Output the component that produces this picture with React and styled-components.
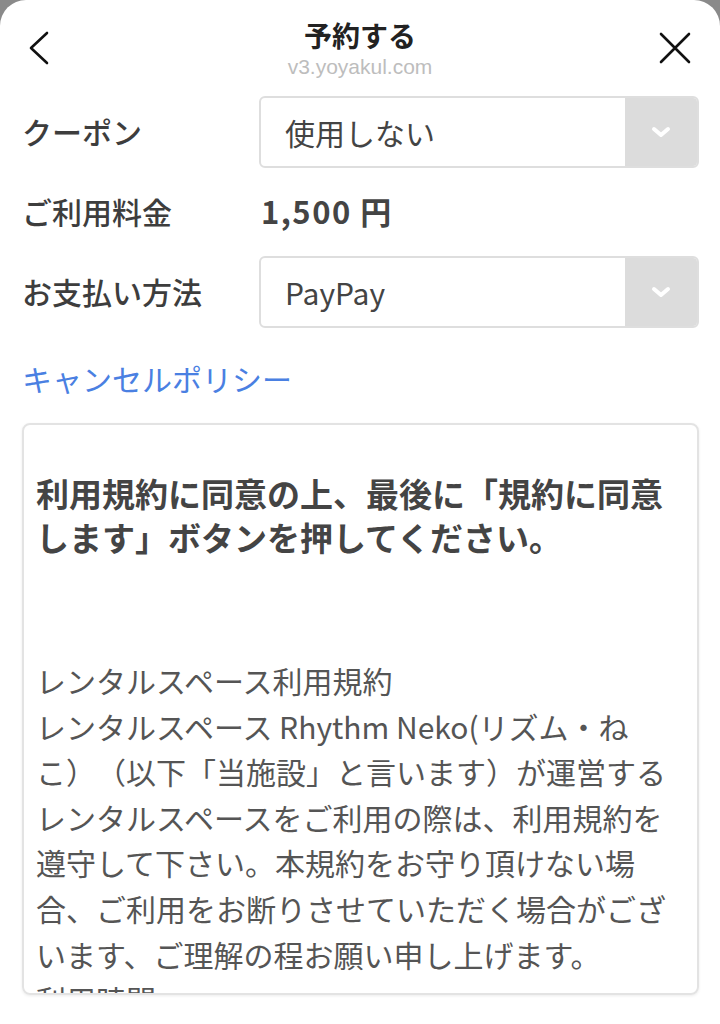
import React from "react";
import styled, { createGlobalStyle } from "styled-components";

const GlobalStyle = createGlobalStyle`
  html, body { margin: 0; padding: 0; background: #8a8a8a; }
  body { font-family: "Noto Sans CJK JP", "Noto Sans", sans-serif; text-spacing-trim: space-all; }
  * { box-sizing: border-box; }
`;

const Sheet = styled.div`
  background: #fff;
  border-radius: 26px 26px 0 0;
  height: 1024px;
  overflow: hidden;
  display: flex;
  flex-direction: column;
`;

const Header = styled.header`
  display: grid;
  grid-template-columns: 80px 1fr 80px;
  height: 96px;
`;

const IconButton = styled.button`
  border: none;
  background: none;
  padding: 0;
  margin-top: ${(p) => p.$top}px;
  justify-self: ${(p) => (p.$end ? "end" : "start")};
  margin-left: ${(p) => (p.$end ? 0 : 29)}px;
  margin-right: ${(p) => (p.$end ? 29 : 0)}px;
  align-self: start;
  display: flex;
  cursor: pointer;
`;

const TitleBlock = styled.div`
  display: flex;
  flex-direction: column;
  align-items: center;
  padding-top: 16px;
`;

const Title = styled.h1`
  margin: 0;
  font-size: 28px;
  line-height: 38px;
  font-weight: 700;
  color: #222;
`;

const Subtitle = styled.div`
  font-family: "Liberation Sans", Arial, sans-serif;
  font-size: 21px;
  line-height: 26px;
  color: #bdbdbd;
`;

const Form = styled.div`
  display: flex;
  flex-direction: column;
  gap: 8px;
  padding: 0 21px 0 22px;
`;

const Row = styled.div`
  display: grid;
  grid-template-columns: 237px 1fr;
  align-items: center;
  min-height: 72px;
`;

const Label = styled.div`
  font-size: 30px;
  font-weight: 500;
  color: #3d3d3d;
  line-height: 40px;
  margin-top: -3px;
`;

const Select = styled.div`
  display: flex;
  height: 72px;
  border: 2px solid #dedede;
  border-radius: 6px;
  overflow: hidden;
  background: #fff;
`;

const SelectValue = styled.div`
  flex: 1;
  display: flex;
  align-items: center;
  padding-left: 24px;
  font-size: 30px;
  color: #444;
`;

const SelectArrow = styled.div`
  width: 72px;
  background: #dcdcdc;
  display: flex;
  align-items: center;
  justify-content: center;
`;

const Price = styled.div`
  font-size: 31px;
  font-weight: 700;
  letter-spacing: 1.5px;
  color: #444;
  padding-left: 2px;
  margin-top: -3px;
`;

const PolicyLink = styled.a`
  display: block;
  margin: 30px 22px 0;
  font-size: 30px;
  line-height: 40px;
  color: #4a80e2;
  text-decoration: none;
`;

const TermsBox = styled.div`
  margin: 25px 21px 0 22px;
  height: 572px;
  border: 2px solid #e3e3e3;
  border-radius: 8px;
  box-shadow: 0 1px 3px rgba(0, 0, 0, 0.08);
  overflow: hidden;
  padding: 46px 26px 0 12px;
`;

const TermsHeading = styled.p`
  margin: 0 0 99px;
  font-size: 33px;
  line-height: 44px;
  font-weight: 700;
  color: #444;
`;

const TermsText = styled.p`
  margin: 0;
  font-size: 30px;
  line-height: 45.6px;
  color: #555;
`;

const Chevron = () => (
  <svg width="22" height="14" viewBox="0 0 22 14">
    <polyline points="4,4 11,10 18,4" fill="none" stroke="#fff" strokeWidth="4" strokeLinecap="round" strokeLinejoin="round" />
  </svg>
);

const Dropdown = ({ value }) => (
  <Select>
    <SelectValue>{value}</SelectValue>
    <SelectArrow>
      <Chevron />
    </SelectArrow>
  </Select>
);

export default function App() {
  return (
    <>
      <GlobalStyle />
      <Sheet>
        <Header>
          <IconButton $top={31} aria-label="戻る">
            <svg width="20" height="34" viewBox="0 0 20 34">
              <polyline points="18,2 2,17 18,32" fill="none" stroke="#111" strokeWidth="2.6" strokeLinecap="round" strokeLinejoin="round" />
            </svg>
          </IconButton>
          <TitleBlock>
            <Title>予約する</Title>
            <Subtitle>v3.yoyakul.com</Subtitle>
          </TitleBlock>
          <IconButton $top={32} $end aria-label="閉じる">
            <svg width="32" height="32" viewBox="0 0 32 32">
              <path d="M2 2 L30 30 M30 2 L2 30" fill="none" stroke="#111" strokeWidth="2.6" strokeLinecap="round" />
            </svg>
          </IconButton>
        </Header>

        <Form>
          <Row>
            <Label>クーポン</Label>
            <Dropdown value="使用しない" />
          </Row>
          <Row>
            <Label>ご利用料金</Label>
            <Price>1,500 円</Price>
          </Row>
          <Row>
            <Label>お支払い方法</Label>
            <Dropdown value="PayPay" />
          </Row>
        </Form>

        <PolicyLink href="#">キャンセルポリシー</PolicyLink>

        <TermsBox>
          <TermsHeading>利用規約に同意の上、最後に「規約に同意します」ボタンを押してください。</TermsHeading>
          <TermsText>
            レンタルスペース利用規約
            <br />
            レンタルスペース Rhythm Neko(リズム・ねこ）（以下「当施設」と言います）が運営するレンタルスペースをご利用の際は、利用規約を遵守して下さい。本規約をお守り頂けない場合、ご利用をお断りさせていただく場合がございます、ご理解の程お願い申し上げます。
            <br />
            利用時間
          </TermsText>
        </TermsBox>
      </Sheet>
    </>
  );
}
